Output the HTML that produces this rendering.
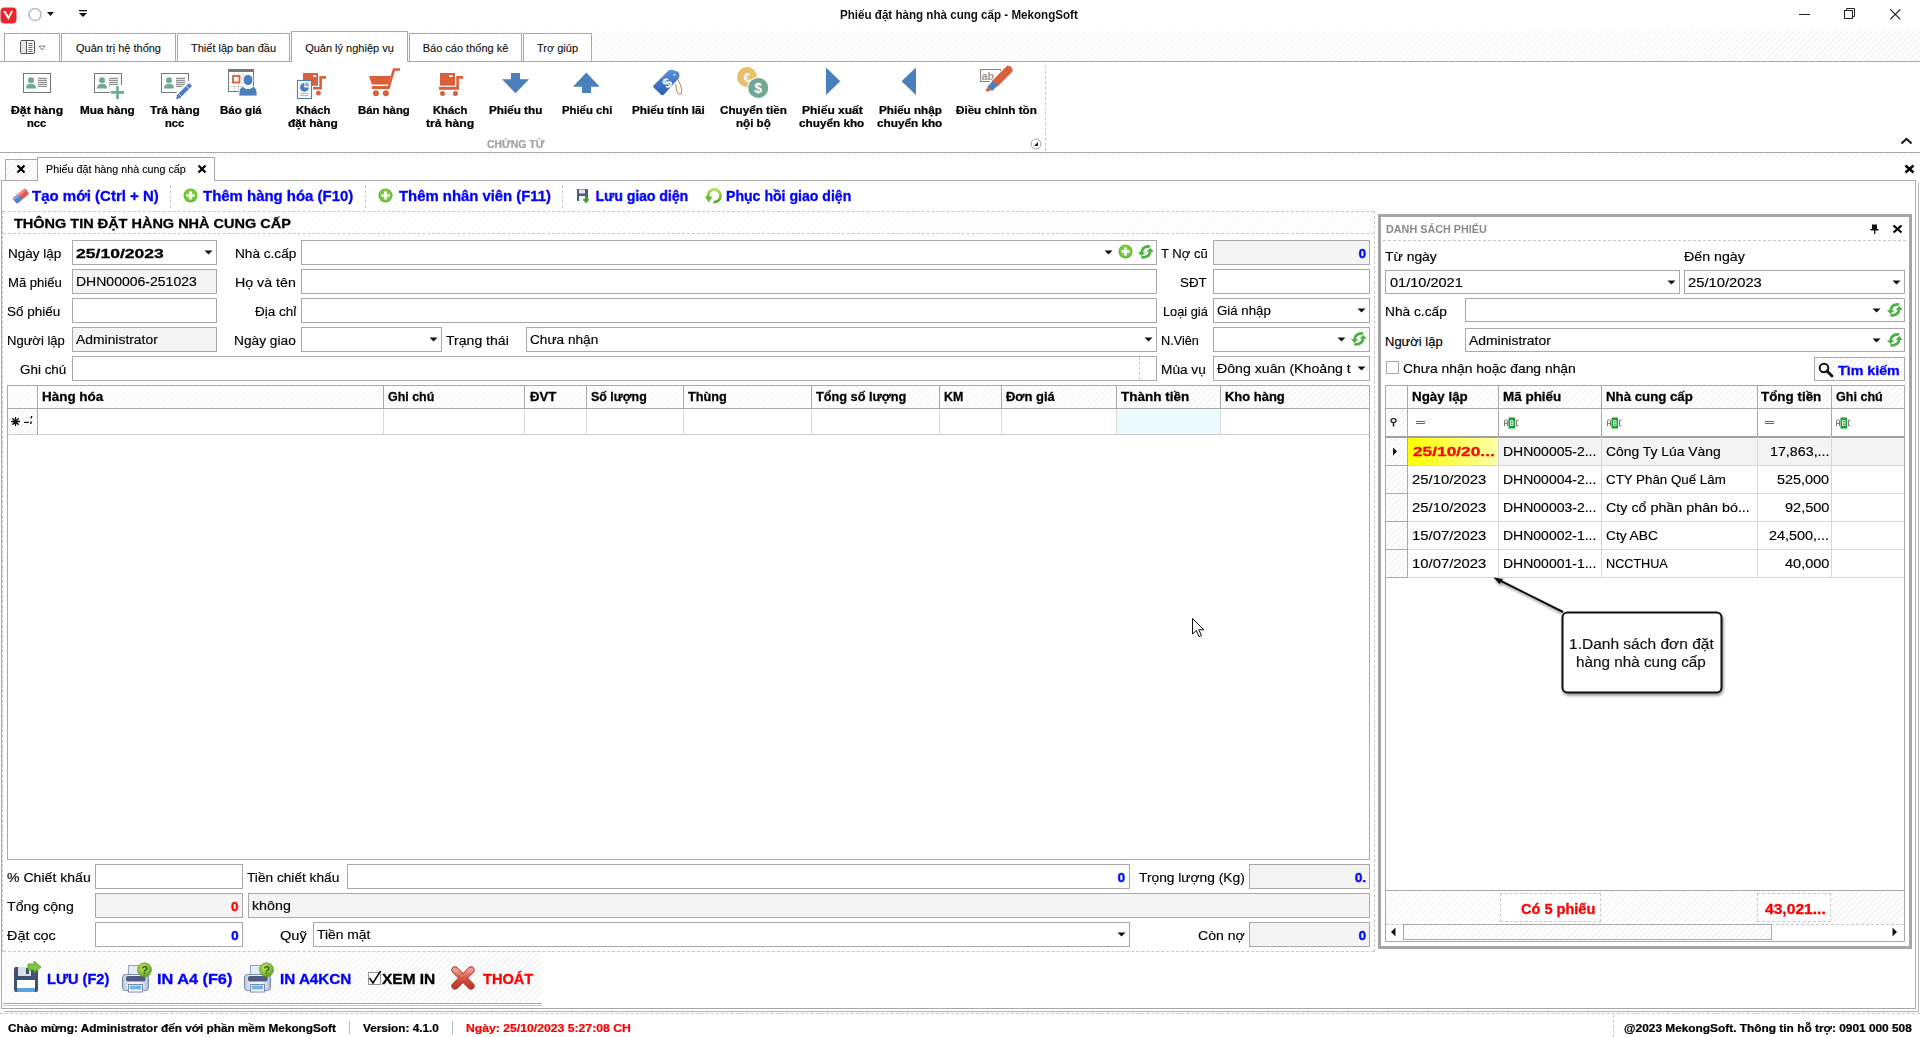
<!DOCTYPE html><html><head><meta charset="utf-8"><title>Phiếu đặt hàng nhà cung cấp - MekongSoft</title><style>*{margin:0;padding:0;box-sizing:border-box}
html,body{width:1920px;height:1037px;overflow:hidden;background:#fff;position:relative}
.a{position:absolute}
.t{position:absolute;white-space:pre;line-height:1;font-family:'Liberation Sans', sans-serif;transform-origin:0 0}
svg.a{overflow:visible}</style></head><body>
<svg class="a" style="left:0px;top:7px;" width="18" height="18" viewBox="0 0 18 18"><rect x="0.5" y="0.5" width="16" height="16" rx="4" fill="#e8262e"/><path d="M3 4 L8.5 13 L13 4 L11 4 L8.5 9 L5.5 4 Z" fill="#fff"/></svg>
<svg class="a" style="left:26px;top:6px;" width="20" height="18" viewBox="0 0 20 18"><circle cx="9" cy="8.5" r="6" fill="none" stroke="#bdbdbd" stroke-width="1.6"/></svg>
<svg class="a" style="left:46px;top:11px;" width="10" height="6" viewBox="0 0 10 6"><path d="M1 1 L8 1 L4.5 5 Z" fill="#111"/></svg>
<svg class="a" style="left:78px;top:9px;" width="12" height="10" viewBox="0 0 12 10"><rect x="1" y="1" width="8" height="1.3" fill="#111"/><path d="M1 4 L9 4 L5 8 Z" fill="#111"/></svg>
<div class="t" style="left:839.85px;top:9.42px;font-size:12.5px;font-weight:700;-webkit-text-stroke:0.27px #111;color:#111;transform:scaleX(0.9279);-webkit-text-stroke:0;">Phiếu đặt hàng nhà cung cấp - MekongSoft</div>
<div class="a" style="left:1799px;top:14px;width:11px;height:1px;background:#222;"></div>
<svg class="a" style="left:1843px;top:7px;" width="14" height="14" viewBox="0 0 14 14"><rect x="1.5" y="3.5" width="8" height="8" fill="none" stroke="#222" stroke-width="1"/><path d="M3.5 3.5 V1.5 H11.5 V9.5 H9.5" fill="none" stroke="#222" stroke-width="1"/></svg>
<svg class="a" style="left:1888px;top:7px;" width="15" height="15" viewBox="0 0 15 15"><path d="M2.3 2.3 L12.3 12.3 M12.3 2.3 L2.3 12.3" stroke="#111" stroke-width="1.1"/></svg>
<div class="a" style="left:0px;top:31px;width:1920px;height:30px;background:repeating-linear-gradient(-45deg,#fff 0px,#fff 3.5px,#f0f0f0 3.55px,#f0f0f0 4.243px);"></div>
<div class="a" style="left:0px;top:61px;width:1920px;height:1px;background:#a9a9a9;"></div>
<div class="a" style="left:4px;top:33px;width:56px;height:29px;border:1px solid #a9a9a9;background:#fff;"></div>
<div class="a" style="left:61px;top:33px;width:115px;height:29px;border:1px solid #a9a9a9;background:#fff;"></div>
<div class="t" style="left:75.99px;top:42.69px;font-size:11px;-webkit-text-stroke:0.13px #111;color:#111;">Quản trị hệ thống</div>
<div class="a" style="left:177px;top:33px;width:113px;height:29px;border:1px solid #a9a9a9;background:#fff;"></div>
<div class="t" style="left:190.99px;top:42.69px;font-size:11px;-webkit-text-stroke:0.13px #111;color:#111;">Thiết lập ban đầu</div>
<div class="a" style="left:291px;top:31px;width:117px;height:31px;border:1px solid #a9a9a9;border-bottom:none;background:#fff"></div>
<div class="t" style="left:305.16px;top:42.69px;font-size:11px;-webkit-text-stroke:0.13px #111;color:#111;">Quản lý nghiệp vụ</div>
<div class="a" style="left:409px;top:33px;width:113px;height:29px;border:1px solid #a9a9a9;background:#fff;"></div>
<div class="t" style="left:422.69px;top:42.69px;font-size:11px;-webkit-text-stroke:0.13px #111;color:#111;">Báo cáo thống kê</div>
<div class="a" style="left:523px;top:33px;width:69px;height:29px;border:1px solid #a9a9a9;background:#fff;"></div>
<div class="t" style="left:536.98px;top:42.69px;font-size:11px;-webkit-text-stroke:0.13px #111;color:#111;">Trợ giúp</div>
<svg class="a" style="left:18px;top:38px;" width="30" height="18" viewBox="0 0 30 18"><rect x="2.5" y="2.5" width="14" height="13" rx="1.5" fill="#fff" stroke="#555" stroke-width="1"/><rect x="3" y="3" width="5" height="12" fill="#e6e6e6"/><line x1="8.5" y1="3" x2="8.5" y2="15" stroke="#555"/><path d="M10.5 5.5h4M10.5 7.5h4M10.5 9.5h4M10.5 11.5h4M10.5 13.5h4" stroke="#555" stroke-width="0.9"/><path d="M21 8 L27 8 L24 12 Z" fill="none" stroke="#777" stroke-width="0.9"/></svg>
<div class="t" style="left:10.85px;top:104.69px;font-size:11px;font-weight:700;-webkit-text-stroke:0.24px #000;color:#000;transform:scaleX(1.1113);">Đặt hàng</div>
<div class="t" style="left:27.35px;top:117.69px;font-size:11px;font-weight:700;-webkit-text-stroke:0.24px #000;color:#000;transform:scaleX(1.0175);">ncc</div>
<div class="t" style="left:80.10px;top:104.69px;font-size:11px;font-weight:700;-webkit-text-stroke:0.24px #000;color:#000;transform:scaleX(1.0673);">Mua hàng</div>
<div class="t" style="left:150.10px;top:104.69px;font-size:11px;font-weight:700;-webkit-text-stroke:0.24px #000;color:#000;transform:scaleX(1.0863);">Trả hàng</div>
<div class="t" style="left:165.35px;top:117.69px;font-size:11px;font-weight:700;-webkit-text-stroke:0.24px #000;color:#000;transform:scaleX(1.0175);">ncc</div>
<div class="t" style="left:220.10px;top:104.69px;font-size:11px;font-weight:700;-webkit-text-stroke:0.24px #000;color:#000;transform:scaleX(1.0520);">Báo giá</div>
<div class="t" style="left:295.85px;top:104.69px;font-size:11px;font-weight:700;-webkit-text-stroke:0.24px #000;color:#000;transform:scaleX(1.0201);">Khách</div>
<div class="t" style="left:288.10px;top:117.69px;font-size:11px;font-weight:700;-webkit-text-stroke:0.24px #000;color:#000;transform:scaleX(1.0863);">đặt hàng</div>
<div class="t" style="left:358.10px;top:104.69px;font-size:11px;font-weight:700;-webkit-text-stroke:0.24px #000;color:#000;transform:scaleX(1.0334);">Bán hàng</div>
<div class="t" style="left:432.85px;top:104.69px;font-size:11px;font-weight:700;-webkit-text-stroke:0.24px #000;color:#000;transform:scaleX(1.0201);">Khách</div>
<div class="t" style="left:425.85px;top:117.69px;font-size:11px;font-weight:700;-webkit-text-stroke:0.24px #000;color:#000;transform:scaleX(1.1127);">trả hàng</div>
<div class="t" style="left:488.85px;top:104.69px;font-size:11px;font-weight:700;-webkit-text-stroke:0.24px #000;color:#000;transform:scaleX(1.0637);">Phiếu thu</div>
<div class="t" style="left:561.85px;top:104.69px;font-size:11px;font-weight:700;-webkit-text-stroke:0.24px #000;color:#000;transform:scaleX(1.0285);">Phiếu chi</div>
<div class="t" style="left:631.60px;top:104.69px;font-size:11px;font-weight:700;-webkit-text-stroke:0.24px #000;color:#000;transform:scaleX(1.0635);">Phiếu tính lãi</div>
<div class="t" style="left:719.60px;top:104.69px;font-size:11px;font-weight:700;-webkit-text-stroke:0.24px #000;color:#000;transform:scaleX(1.0611);">Chuyển tiền</div>
<div class="t" style="left:735.60px;top:117.69px;font-size:11px;font-weight:700;-webkit-text-stroke:0.24px #000;color:#000;transform:scaleX(1.0545);">nội bộ</div>
<div class="t" style="left:801.60px;top:104.69px;font-size:11px;font-weight:700;-webkit-text-stroke:0.24px #000;color:#000;transform:scaleX(1.0930);">Phiếu xuất</div>
<div class="t" style="left:799.35px;top:117.69px;font-size:11px;font-weight:700;-webkit-text-stroke:0.24px #000;color:#000;transform:scaleX(1.0683);">chuyển kho</div>
<div class="t" style="left:878.60px;top:104.69px;font-size:11px;font-weight:700;-webkit-text-stroke:0.24px #000;color:#000;transform:scaleX(1.0594);">Phiếu nhập</div>
<div class="t" style="left:877.35px;top:117.69px;font-size:11px;font-weight:700;-webkit-text-stroke:0.24px #000;color:#000;transform:scaleX(1.0683);">chuyển kho</div>
<div class="t" style="left:955.60px;top:104.69px;font-size:11px;font-weight:700;-webkit-text-stroke:0.24px #000;color:#000;transform:scaleX(1.0577);">Điều chỉnh tồn</div>
<svg class="a" style="left:0;top:0" width="1100" height="152" viewBox="0 0 1100 152"><rect x="23.5" y="73.5" width="27" height="19" fill="#fff" stroke="#777" stroke-width="1"/><circle fill="#6fa893" cx="31" cy="80.3" r="3"/><path d="M26 88.5 Q26 84 30 84 L32 84 Q36 84 36 88.5 Z" fill="#6fa893"/><rect x="38" y="77.8" width="9" height="1" fill="#777"/><rect x="38" y="79.8" width="9" height="1" fill="#777"/><rect x="38" y="81.8" width="9" height="1" fill="#777"/><rect x="38" y="83.8" width="9" height="1" fill="#777"/><rect x="38" y="85.8" width="9" height="1" fill="#777"/><rect x="94.5" y="73.5" width="27" height="19" fill="#fff" stroke="#777" stroke-width="1"/><circle fill="#6fa893" cx="102" cy="80.3" r="3"/><path d="M97 88.5 Q97 84 101 84 L103 84 Q107 84 107 88.5 Z" fill="#6fa893"/><rect x="109" y="77.8" width="9" height="1" fill="#777"/><rect x="109" y="79.8" width="9" height="1" fill="#777"/><rect x="109" y="81.8" width="9" height="1" fill="#777"/><rect x="109" y="83.8" width="9" height="1" fill="#777"/><rect x="109" y="85.8" width="9" height="1" fill="#777"/><rect x="110" y="85" width="15" height="15" fill="#fff"/><rect x="116.2" y="86" width="2.6" height="13" fill="#6fa893"/><rect x="111" y="91" width="13" height="2.8" fill="#6fa893"/><rect x="161.5" y="73.5" width="27" height="19" fill="#fff" stroke="#777" stroke-width="1"/><circle fill="#6fa893" cx="169" cy="80.3" r="3"/><path d="M164 88.5 Q164 84 168 84 L170 84 Q174 84 174 88.5 Z" fill="#6fa893"/><rect x="176" y="77.8" width="9" height="1" fill="#777"/><rect x="176" y="79.8" width="9" height="1" fill="#777"/><rect x="176" y="81.8" width="9" height="1" fill="#777"/><rect x="176" y="83.8" width="9" height="1" fill="#777"/><rect x="176" y="85.8" width="9" height="1" fill="#777"/><rect x="185" y="88" width="5" height="6" fill="#fff"/><path d="M175 100 L193 82" stroke="#fff" stroke-width="8"/><path d="M178 97 L190.5 84.5" stroke="#4a7fbd" stroke-width="4.2"/><path d="M176 99.2 L177.2 95 L180.3 98 Z" fill="#4a7fbd"/><path d="M178.6 93.6 L181.5 96.5 M186.3 85.9 L189.2 88.8" stroke="#fff" stroke-width="0.8"/><rect x="228.5" y="70.5" width="25" height="21" fill="#fff" stroke="#777" stroke-width="1"/><rect x="228" y="69" width="26" height="3" fill="#777"/><path d="M228.5 86.5 H244 M234 73 V91 M238.5 73 V91 M243 73 V86" stroke="#ccc" stroke-width="0.8"/><rect x="233" y="76" width="6.5" height="6.5" fill="#fff" stroke="#d9603b" stroke-width="1.8"/><ellipse cx="248" cy="80" rx="5" ry="5.6" fill="#4a7fbd" stroke="#fff" stroke-width="1"/><path d="M239 96 Q238.5 88 242.5 86.5 L246 88.5 L250 88.5 L253.5 86.5 Q257.5 88 257 96 Z" fill="#4a7fbd" stroke="#fff" stroke-width="0.8"/><rect x="303" y="73" width="15" height="12.8" fill="#d9603b"/><rect x="313" y="75" width="3.2" height="2" fill="#fff"/><path d="M313 88.2 H320.6 V77.4 H326" fill="none" stroke="#d9603b" stroke-width="2.6"/><circle cx="318.4" cy="93.2" r="2.4" fill="#d9603b"/><rect x="297.5" y="80.5" width="14" height="18" fill="#fff" stroke="#4a7fbd" stroke-width="1.1"/><path d="M304.4 83 A4.4 4.4 0 1 0 308.8 87.4 L304.4 87.4 Z" fill="#4a7fbd"/><path d="M305.3 82.3 A4 4 0 0 1 309.3 86.3 L305.3 86.3 Z" fill="#8fb0d8"/><rect x="300" y="93" width="9" height="0.8" fill="#aaa"/><rect x="300" y="95.2" width="9" height="0.8" fill="#aaa"/><path d="M369 76 L391 76 L388.5 84.6 L371.8 84.6 Z" fill="#d9603b"/><path d="M388.2 89 L394 69.5 H400" fill="none" stroke="#d9603b" stroke-width="2.6"/><rect x="372" y="86" width="17" height="3" fill="#d9603b"/><circle cx="375.9" cy="93.2" r="3" fill="#d9603b"/><circle cx="385.9" cy="93.2" r="3" fill="#d9603b"/><rect x="440" y="73" width="15" height="12.6" fill="#d9603b"/><rect x="449" y="75" width="3.6" height="2" fill="#fff"/><rect x="439" y="86.8" width="20" height="3" fill="#d9603b"/><path d="M457.6 87 V77.4 H463" fill="none" stroke="#d9603b" stroke-width="2.6"/><circle cx="442.5" cy="93.5" r="2.5" fill="#d9603b"/><circle cx="455.4" cy="93.5" r="2.5" fill="#d9603b"/><path d="M511 73 H520 V79.2 H529 L515.5 93.2 L502 79.2 H511 Z" fill="#4a7fbd"/><path d="M586.3 72.6 L599.8 86.8 H591 V92.9 H582 V86.8 H573 Z" fill="#4a7fbd"/><defs><linearGradient id="tg" x1="0" y1="0" x2="0" y2="1"><stop offset="0" stop-color="#5a8fe0"/><stop offset="1" stop-color="#2b5fb0"/></linearGradient></defs><path d="M653.5 85.5 L668.5 70.5 Q670 69.5 672 69.8 L677.5 71.5 Q679.5 72.8 679.5 75 L679 78 L664 94.5 Q663 95.8 661.5 95 L654 88 Q652.5 86.5 653.5 85.5 Z" fill="url(#tg)"/><circle cx="674.5" cy="75" r="1" fill="#fff"/><path d="M674.5 75.3 Q683 85 681.5 94 Q679 96 677 92 L675.5 84" fill="none" stroke="#9a6a3e" stroke-width="0.8"/><text x="667" y="88" font-family="Liberation Sans" font-size="14" font-weight="bold" fill="#fff" text-anchor="middle" transform="rotate(-40 667 83)">$</text><circle cx="747" cy="77" r="10" fill="#e8c06a"/><text x="747" y="81.5" font-family="Liberation Sans" font-size="12" font-weight="bold" fill="#fff" text-anchor="middle">€</text><circle cx="758.2" cy="87.9" r="11" fill="#fff"/><circle cx="758.2" cy="87.9" r="10" fill="#6fa893"/><text x="758.2" y="93" font-family="Liberation Sans" font-size="14" font-weight="bold" fill="#fff" text-anchor="middle">$</text><path d="M826 67.6 L840.3 81.3 L826 95.1 Z" fill="#4a7fbd"/><path d="M916 67.6 L901.5 81.3 L916 95.1 Z" fill="#4a7fbd"/><rect x="980.5" y="69.5" width="20" height="12" fill="#fff" stroke="#888" stroke-width="1"/><text x="981.5" y="79.5" font-family="Liberation Sans" font-size="11" font-weight="bold" fill="#999">ab</text><path d="M992.5 86 L1009 69.5" stroke="#fff" stroke-width="10"/><path d="M995.5 83 L1008.5 70" stroke="#d9603b" stroke-width="8" stroke-linecap="round"/><path d="M989.8 88.7 L995.5 83" stroke="#4a7fbd" stroke-width="6.5"/><path d="M985.5 90.5 L988 86.5 L991.5 90 L987.5 91.8 Z" fill="#d9603b"/></svg>
<div class="t" style="left:487.35px;top:139.19px;font-size:11px;font-weight:700;-webkit-text-stroke:0.24px #a3a3a3;color:#a3a3a3;transform:scaleX(0.9483);">CHỨNG TỪ</div>
<div class="a" style="left:1045px;top:66px;width:0;height:85px;border-left:1px dashed #c8c8c8"></div>
<svg class="a" style="left:1030px;top:138px;" width="12" height="12" viewBox="0 0 12 12"><circle cx="6" cy="6" r="5" fill="#fff" stroke="#999" stroke-width="0.9"/><path d="M4 8 L8 8 L8 4 Z" fill="#222"/></svg>
<svg class="a" style="left:1900px;top:137px;" width="13" height="8" viewBox="0 0 13 8"><path d="M1.5 6.5 L6.5 1.8 L11.5 6.5" fill="none" stroke="#111" stroke-width="2"/></svg>
<div class="a" style="left:0px;top:152px;width:1920px;height:1px;background:#a9a9a9;"></div>
<div class="a" style="left:0px;top:153px;width:1920px;height:4px;background:repeating-linear-gradient(-45deg,#fff 0px,#fff 3.5px,#f0f0f0 3.55px,#f0f0f0 4.243px);"></div>
<div class="a" style="left:5px;top:159px;width:33px;height:22px;border:1px solid #a9a9a9;border-bottom:none;background:repeating-linear-gradient(-45deg,#fff 0px,#fff 3.5px,#f0f0f0 3.55px,#f0f0f0 4.243px)"></div>
<div class="a" style="left:37px;top:157px;width:178px;height:24px;border:1px solid #a9a9a9;border-bottom:none;background:#fff"></div>
<svg class="a" style="left:16px;top:164px;" width="10" height="10" viewBox="0 0 10 10"><path d="M1.5 1.5 L8.5 8.5 M8.5 1.5 L1.5 8.5" stroke="#000" stroke-width="2.2"/></svg>
<svg class="a" style="left:197px;top:164px;" width="10" height="10" viewBox="0 0 10 10"><path d="M1.5 1.5 L8.5 8.5 M8.5 1.5 L1.5 8.5" stroke="#000" stroke-width="2.2"/></svg>
<div class="t" style="left:46.00px;top:163.69px;font-size:11px;-webkit-text-stroke:0.13px #000;color:#000;transform:scaleX(0.9768);">Phiếu đặt hàng nhà cung cấp</div>
<svg class="a" style="left:1904px;top:164px;" width="11" height="10" viewBox="0 0 11 10"><path d="M1.5 1.5 L9.5 8.5 M9.5 1.5 L1.5 8.5" stroke="#000" stroke-width="2.4"/></svg>
<div class="a" style="left:1px;top:180px;width:36px;height:1px;background:#a9a9a9;"></div>
<div class="a" style="left:214px;top:180px;width:1702px;height:1px;background:#a9a9a9;"></div>
<div class="a" style="left:1px;top:180px;width:1px;height:828px;background:#a9a9a9;"></div>
<div class="a" style="left:1915px;top:180px;width:1px;height:828px;background:#a9a9a9;"></div>
<div class="a" style="left:1918px;top:183px;width:1px;height:828px;background:#b5b5b5;"></div>
<div class="a" style="left:1px;top:1008px;width:1915px;height:1px;background:#a9a9a9;"></div>
<div class="a" style="left:4px;top:1011px;width:1915px;height:1px;background:#b5b5b5;"></div>
<svg class="a" style="left:12px;top:188px;" width="18" height="16" viewBox="0 0 18 16"><g transform="rotate(-40 9 8)"><rect x="1" y="4.5" width="16" height="7" rx="1.5" fill="#e8534a"/><rect x="1" y="4.5" width="7" height="7" rx="1.5" fill="#4a86d6"/><rect x="2" y="5" width="14" height="2" fill="#fff" opacity="0.35"/></g></svg>
<div class="t" style="left:32.00px;top:189.15px;font-size:14px;font-weight:700;-webkit-text-stroke:0.31px #0000ff;color:#0000ff;transform:scaleX(1.0703);">Tạo mới (Ctrl + N)</div>
<div class="a" style="left:170px;top:185px;width:0;height:23px;border-left:1px dashed #c8c8c8"></div>
<svg class="a" style="left:183px;top:188px;" width="16" height="16" viewBox="0 0 16 16"><circle cx="7.5" cy="7.5" r="7" fill="#5fb82e"/><circle cx="7.5" cy="7" r="6" fill="#78cc3c"/><path d="M7.5 3.5 V11.5 M3.5 7.5 H11.5" stroke="#fff" stroke-width="2.6"/></svg>
<div class="t" style="left:203.00px;top:189.15px;font-size:14px;font-weight:700;-webkit-text-stroke:0.31px #0000ff;color:#0000ff;transform:scaleX(1.0675);">Thêm hàng hóa (F10)</div>
<div class="a" style="left:365px;top:185px;width:0;height:23px;border-left:1px dashed #c8c8c8"></div>
<svg class="a" style="left:378px;top:188px;" width="16" height="16" viewBox="0 0 16 16"><circle cx="7.5" cy="7.5" r="7" fill="#5fb82e"/><circle cx="7.5" cy="7" r="6" fill="#78cc3c"/><path d="M7.5 3.5 V11.5 M3.5 7.5 H11.5" stroke="#fff" stroke-width="2.6"/></svg>
<div class="t" style="left:398.75px;top:189.15px;font-size:14px;font-weight:700;-webkit-text-stroke:0.31px #0000ff;color:#0000ff;transform:scaleX(1.0622);">Thêm nhân viên (F11)</div>
<div class="a" style="left:562px;top:185px;width:0;height:23px;border-left:1px dashed #c8c8c8"></div>
<svg class="a" style="left:576px;top:188px;" width="16" height="16" viewBox="0 0 16 16"><rect x="1" y="1" width="11" height="12" fill="#4b5d78"/><rect x="3" y="1.5" width="6" height="4" fill="#dfe6ee"/><rect x="3" y="8" width="7" height="5" fill="#eef2f6"/><path d="M10 8 V13 M7.5 11 L10 14 L12.5 11" stroke="#3aa33a" stroke-width="2" fill="none"/></svg>
<div class="t" style="left:595.50px;top:189.15px;font-size:14px;font-weight:700;-webkit-text-stroke:0.31px #0000ff;color:#0000ff;">Lưu giao diện</div>
<svg class="a" style="left:704px;top:187px;" width="19" height="18" viewBox="0 0 19 18"><defs><linearGradient id="rg" x1="0" y1="0" x2="0" y2="1"><stop offset="0" stop-color="#b5e05a"/><stop offset="1" stop-color="#5aa82a"/></linearGradient></defs><path d="M4.6 11.5 A6.3 6.3 0 1 1 9.5 15" fill="none" stroke="url(#rg)" stroke-width="2.8"/><path d="M1 9.5 L8.5 9.5 L4.7 15.5 Z" fill="#6ab530"/></svg>
<div class="t" style="left:726.00px;top:189.15px;font-size:14px;font-weight:700;-webkit-text-stroke:0.31px #0000ff;color:#0000ff;transform:scaleX(1.0068);">Phục hồi giao diện</div>
<div class="a" style="left:3px;top:212px;width:1371px;height:21px;background:repeating-linear-gradient(-45deg,#fff 0px,#fff 3.5px,#f0f0f0 3.55px,#f0f0f0 4.243px);opacity:0.4"></div>
<div class="a" style="left:3px;top:211px;width:1371px;height:0;border-top:1px dashed #c8c8c8"></div>
<div class="a" style="left:3px;top:233px;width:1371px;height:0;border-top:1px dashed #c8c8c8"></div>
<div class="a" style="left:1374px;top:211px;width:0;height:741px;border-left:1px dashed #c8c8c8"></div>
<div class="a" style="left:2px;top:211px;width:0;height:741px;border-left:1px dashed #c8c8c8"></div>
<div class="t" style="left:14.00px;top:217.07px;font-size:13.5px;font-weight:700;-webkit-text-stroke:0.30px #000;color:#000;transform:scaleX(1.0729);">THÔNG TIN ĐẶT HÀNG NHÀ CUNG CẤP</div>
<div class="t" style="left:7.50px;top:247.62px;font-size:12.5px;-webkit-text-stroke:0.15px #000;color:#000;transform:scaleX(1.0802);">Ngày lập</div>
<div class="a" style="left:72px;top:240px;width:145px;height:25px;border:1px solid #a9a9a9;background:#fff;"></div>
<div class="t" style="left:76.00px;top:246.57px;font-size:13.5px;font-weight:700;-webkit-text-stroke:0.30px #000;color:#000;transform:scaleX(1.2992);">25/10/2023</div>
<svg class="a" style="left:204px;top:250px;" width="9" height="5" viewBox="0 0 9 5"><path d="M0.5 0.5 L8.5 0.5 L4.5 4.5 Z" fill="#111"/></svg>
<div class="t" style="left:234.70px;top:247.62px;font-size:12.5px;-webkit-text-stroke:0.15px #000;color:#000;transform:scaleX(1.0892);">Nhà c.cấp</div>
<div class="a" style="left:301px;top:240px;width:856px;height:25px;border:1px solid #a9a9a9;background:#fff;"></div>
<svg class="a" style="left:1104px;top:250px;" width="9" height="5" viewBox="0 0 9 5"><path d="M0.5 0.5 L8.5 0.5 L4.5 4.5 Z" fill="#111"/></svg>
<svg class="a" style="left:1118px;top:244px;" width="16" height="16" viewBox="0 0 16 16"><circle cx="7.5" cy="7.5" r="7" fill="#5fb82e"/><circle cx="7.5" cy="7" r="6" fill="#78cc3c"/><path d="M7.5 3.5 V11.5 M3.5 7.5 H11.5" stroke="#fff" stroke-width="2.6"/></svg>
<svg class="a" style="left:1137px;top:244px;" width="16" height="15" viewBox="0 0 16 15"><path d="M12 2.3 Q5 2.5 4.6 8.6" stroke="#4cb043" stroke-width="2.7" fill="none" stroke-linecap="round"/><path d="M0.8 8.2 L8.4 8.2 L4.6 12 Z" fill="#4cb043"/><path d="M5.5 13.4 Q12.6 13.1 13.2 7.4" stroke="#4cb043" stroke-width="2.7" fill="none" stroke-linecap="round"/><path d="M9.5 7.7 L16.9 7.7 L13.2 4 Z" fill="#4cb043"/></svg>
<div class="t" style="left:1161.00px;top:247.62px;font-size:12.5px;-webkit-text-stroke:0.15px #000;color:#000;transform:scaleX(1.0447);">T Nợ cũ</div>
<div class="a" style="left:1213px;top:240px;width:157px;height:25px;border:1px solid #a9a9a9;background:#f4f4f4;"></div>
<div class="t" style="left:1358.48px;top:246.57px;font-size:13.5px;font-weight:700;-webkit-text-stroke:0.30px #0000ff;color:#0000ff;">0</div>
<div class="t" style="left:7.50px;top:276.62px;font-size:12.5px;-webkit-text-stroke:0.15px #000;color:#000;transform:scaleX(1.0459);">Mã phiếu</div>
<div class="a" style="left:72px;top:269px;width:145px;height:25px;border:1px solid #a9a9a9;background:#f4f4f4;"></div>
<div class="t" style="left:76.00px;top:276.42px;font-size:12.5px;-webkit-text-stroke:0.15px #000;color:#000;transform:scaleX(1.1214);">DHN00006-251023</div>
<div class="t" style="left:235.20px;top:276.62px;font-size:12.5px;-webkit-text-stroke:0.15px #000;color:#000;transform:scaleX(1.1361);">Họ và tên</div>
<div class="a" style="left:301px;top:269px;width:856px;height:25px;border:1px solid #a9a9a9;background:#fff;"></div>
<div class="t" style="left:1180.20px;top:276.62px;font-size:12.5px;-webkit-text-stroke:0.15px #000;color:#000;transform:scaleX(1.0720);">SĐT</div>
<div class="a" style="left:1213px;top:269px;width:157px;height:25px;border:1px solid #a9a9a9;background:#fff;"></div>
<div class="t" style="left:7.00px;top:305.62px;font-size:12.5px;-webkit-text-stroke:0.15px #000;color:#000;transform:scaleX(1.0798);">Số phiếu</div>
<div class="a" style="left:72px;top:298px;width:145px;height:25px;border:1px solid #a9a9a9;background:#fff;"></div>
<div class="t" style="left:254.70px;top:305.62px;font-size:12.5px;-webkit-text-stroke:0.15px #000;color:#000;transform:scaleX(1.0806);">Địa chỉ</div>
<div class="a" style="left:301px;top:298px;width:856px;height:25px;border:1px solid #a9a9a9;background:#fff;"></div>
<div class="t" style="left:1162.70px;top:305.62px;font-size:12.5px;-webkit-text-stroke:0.15px #000;color:#000;transform:scaleX(1.0229);">Loại giá</div>
<div class="a" style="left:1213px;top:298px;width:157px;height:25px;border:1px solid #a9a9a9;background:#fff;"></div>
<div class="t" style="left:1217.00px;top:305.42px;font-size:12.5px;-webkit-text-stroke:0.15px #000;color:#000;transform:scaleX(1.0604);">Giá nhập</div>
<svg class="a" style="left:1357px;top:308px;" width="9" height="5" viewBox="0 0 9 5"><path d="M0.5 0.5 L8.5 0.5 L4.5 4.5 Z" fill="#111"/></svg>
<div class="t" style="left:7.00px;top:334.62px;font-size:12.5px;-webkit-text-stroke:0.15px #000;color:#000;transform:scaleX(1.0417);">Người lập</div>
<div class="a" style="left:72px;top:327px;width:145px;height:25px;border:1px solid #a9a9a9;background:#f4f4f4;"></div>
<div class="t" style="left:76.00px;top:334.42px;font-size:12.5px;-webkit-text-stroke:0.15px #000;color:#000;transform:scaleX(1.1108);">Administrator</div>
<div class="t" style="left:234.20px;top:334.62px;font-size:12.5px;-webkit-text-stroke:0.15px #000;color:#000;transform:scaleX(1.0978);">Ngày giao</div>
<div class="a" style="left:301px;top:327px;width:141px;height:25px;border:1px solid #a9a9a9;background:#fff;"></div>
<svg class="a" style="left:429px;top:337px;" width="9" height="5" viewBox="0 0 9 5"><path d="M0.5 0.5 L8.5 0.5 L4.5 4.5 Z" fill="#111"/></svg>
<div class="t" style="left:446.00px;top:334.62px;font-size:12.5px;-webkit-text-stroke:0.15px #000;color:#000;transform:scaleX(1.1249);">Trạng thái</div>
<div class="a" style="left:526px;top:327px;width:631px;height:25px;border:1px solid #a9a9a9;background:#fff;"></div>
<div class="t" style="left:530.00px;top:334.42px;font-size:12.5px;-webkit-text-stroke:0.15px #000;color:#000;transform:scaleX(1.0912);">Chưa nhận</div>
<svg class="a" style="left:1144px;top:337px;" width="9" height="5" viewBox="0 0 9 5"><path d="M0.5 0.5 L8.5 0.5 L4.5 4.5 Z" fill="#111"/></svg>
<div class="t" style="left:1161.00px;top:334.62px;font-size:12.5px;-webkit-text-stroke:0.15px #000;color:#000;transform:scaleX(1.0135);">N.Viên</div>
<div class="a" style="left:1213px;top:327px;width:157px;height:25px;border:1px solid #a9a9a9;background:#fff;"></div>
<svg class="a" style="left:1337px;top:337px;" width="9" height="5" viewBox="0 0 9 5"><path d="M0.5 0.5 L8.5 0.5 L4.5 4.5 Z" fill="#111"/></svg>
<svg class="a" style="left:1350px;top:331px;" width="16" height="15" viewBox="0 0 16 15"><path d="M12 2.3 Q5 2.5 4.6 8.6" stroke="#4cb043" stroke-width="2.7" fill="none" stroke-linecap="round"/><path d="M0.8 8.2 L8.4 8.2 L4.6 12 Z" fill="#4cb043"/><path d="M5.5 13.4 Q12.6 13.1 13.2 7.4" stroke="#4cb043" stroke-width="2.7" fill="none" stroke-linecap="round"/><path d="M9.5 7.7 L16.9 7.7 L13.2 4 Z" fill="#4cb043"/></svg>
<div class="t" style="left:20.20px;top:363.62px;font-size:12.5px;-webkit-text-stroke:0.15px #000;color:#000;transform:scaleX(1.0744);">Ghi chú</div>
<div class="a" style="left:72px;top:356px;width:1085px;height:25px;border:1px solid #a9a9a9;background:#fff;"></div>
<div class="a" style="left:1139px;top:357px;width:0;height:23px;border-left:1px dashed #c8c8c8"></div>
<div class="t" style="left:1161.00px;top:363.62px;font-size:12.5px;-webkit-text-stroke:0.15px #000;color:#000;transform:scaleX(1.0927);">Mùa vụ</div>
<div class="a" style="left:1213px;top:356px;width:157px;height:25px;border:1px solid #a9a9a9;background:#fff;"></div>
<div class="t" style="left:1217.00px;top:363.42px;font-size:12.5px;-webkit-text-stroke:0.15px #000;color:#000;transform:scaleX(1.1325);">Đông xuân (Khoảng t</div>
<svg class="a" style="left:1357px;top:366px;" width="9" height="5" viewBox="0 0 9 5"><path d="M0.5 0.5 L8.5 0.5 L4.5 4.5 Z" fill="#111"/></svg>
<div class="a" style="left:7px;top:385px;width:1363px;height:475px;border:1px solid #a9a9a9;background:#fff;"></div>
<div class="a" style="left:8px;top:386px;width:1361px;height:22px;background:repeating-linear-gradient(-45deg,#fff 0px,#fff 3.5px,#f0f0f0 3.55px,#f0f0f0 4.243px);"></div>
<div class="a" style="left:8px;top:408px;width:1361px;height:1px;background:#a9a9a9;"></div>
<div class="a" style="left:37px;top:386px;width:1px;height:22px;background:#a9a9a9;"></div>
<div class="a" style="left:383px;top:386px;width:1px;height:22px;background:#a9a9a9;"></div>
<div class="a" style="left:524px;top:386px;width:1px;height:22px;background:#a9a9a9;"></div>
<div class="a" style="left:586px;top:386px;width:1px;height:22px;background:#a9a9a9;"></div>
<div class="a" style="left:683px;top:386px;width:1px;height:22px;background:#a9a9a9;"></div>
<div class="a" style="left:811px;top:386px;width:1px;height:22px;background:#a9a9a9;"></div>
<div class="a" style="left:939px;top:386px;width:1px;height:22px;background:#a9a9a9;"></div>
<div class="a" style="left:1001px;top:386px;width:1px;height:22px;background:#a9a9a9;"></div>
<div class="a" style="left:1116px;top:386px;width:1px;height:22px;background:#a9a9a9;"></div>
<div class="a" style="left:1220px;top:386px;width:1px;height:22px;background:#a9a9a9;"></div>
<div class="t" style="left:42.00px;top:390.84px;font-size:12px;font-weight:700;-webkit-text-stroke:0.26px #000;color:#000;transform:scaleX(1.1212);">Hàng hóa</div>
<div class="t" style="left:387.50px;top:390.84px;font-size:12px;font-weight:700;-webkit-text-stroke:0.26px #000;color:#000;transform:scaleX(1.0364);">Ghi chú</div>
<div class="t" style="left:529.50px;top:390.84px;font-size:12px;font-weight:700;-webkit-text-stroke:0.26px #000;color:#000;transform:scaleX(1.0958);">ĐVT</div>
<div class="t" style="left:591.00px;top:390.84px;font-size:12px;font-weight:700;-webkit-text-stroke:0.26px #000;color:#000;transform:scaleX(1.0354);">Số lượng</div>
<div class="t" style="left:688.00px;top:390.84px;font-size:12px;font-weight:700;-webkit-text-stroke:0.26px #000;color:#000;transform:scaleX(1.0585);">Thùng</div>
<div class="t" style="left:816.00px;top:390.84px;font-size:12px;font-weight:700;-webkit-text-stroke:0.26px #000;color:#000;transform:scaleX(1.0596);">Tổng số lượng</div>
<div class="t" style="left:944.00px;top:390.84px;font-size:12px;font-weight:700;-webkit-text-stroke:0.26px #000;color:#000;transform:scaleX(1.0336);">KM</div>
<div class="t" style="left:1006.00px;top:390.84px;font-size:12px;font-weight:700;-webkit-text-stroke:0.26px #000;color:#000;transform:scaleX(1.0796);">Đơn giá</div>
<div class="t" style="left:1121.00px;top:390.84px;font-size:12px;font-weight:700;-webkit-text-stroke:0.26px #000;color:#000;transform:scaleX(1.1257);">Thành tiền</div>
<div class="t" style="left:1225.00px;top:390.84px;font-size:12px;font-weight:700;-webkit-text-stroke:0.26px #000;color:#000;transform:scaleX(1.0808);">Kho hàng</div>
<div class="a" style="left:8px;top:409px;width:29px;height:25px;background:repeating-linear-gradient(-45deg,#fff 0px,#fff 3.5px,#f0f0f0 3.55px,#f0f0f0 4.243px);"></div>
<div class="a" style="left:37px;top:408px;width:1px;height:26px;background:#a9a9a9;"></div>
<div class="a" style="left:1117px;top:409px;width:103px;height:25px;background:#ebfbff;"></div>
<div class="a" style="left:383px;top:409px;width:1px;height:25px;background:#d8d8d8;"></div>
<div class="a" style="left:524px;top:409px;width:1px;height:25px;background:#d8d8d8;"></div>
<div class="a" style="left:586px;top:409px;width:1px;height:25px;background:#d8d8d8;"></div>
<div class="a" style="left:683px;top:409px;width:1px;height:25px;background:#d8d8d8;"></div>
<div class="a" style="left:811px;top:409px;width:1px;height:25px;background:#d8d8d8;"></div>
<div class="a" style="left:939px;top:409px;width:1px;height:25px;background:#d8d8d8;"></div>
<div class="a" style="left:1001px;top:409px;width:1px;height:25px;background:#d8d8d8;"></div>
<div class="a" style="left:1116px;top:409px;width:1px;height:25px;background:#d8d8d8;"></div>
<div class="a" style="left:1220px;top:409px;width:1px;height:25px;background:#d8d8d8;"></div>
<div class="a" style="left:8px;top:434px;width:1361px;height:1px;background:#d0d0d0;"></div>
<svg class="a" style="left:10px;top:416px;" width="24" height="12" viewBox="0 0 24 12"><path d="M5.5 1 V10 M1 5.5 H10 M2.3 2.3 L8.7 8.7 M8.7 2.3 L2.3 8.7" stroke="#111" stroke-width="1.3"/><rect x="14" y="5.8" width="5" height="1.2" fill="#111"/><path d="M21 0 L22.5 0 L21.8 2.5 L20.6 2.5 Z M20.5 5.5 L22 5.5 L21.4 8 L20 8 Z" fill="#111"/></svg>
<div class="t" style="left:7.00px;top:871.62px;font-size:12.5px;-webkit-text-stroke:0.15px #000;color:#000;transform:scaleX(1.1270);">% Chiết khấu</div>
<div class="a" style="left:95px;top:864px;width:148px;height:25px;border:1px solid #a9a9a9;background:#fff;"></div>
<div class="t" style="left:247.00px;top:871.62px;font-size:12.5px;-webkit-text-stroke:0.15px #000;color:#000;transform:scaleX(1.0947);">Tiền chiết khấu</div>
<div class="a" style="left:347px;top:864px;width:783px;height:25px;border:1px solid #a9a9a9;background:#fff;"></div>
<div class="t" style="left:1117.48px;top:870.57px;font-size:13.5px;font-weight:700;-webkit-text-stroke:0.30px #0000ff;color:#0000ff;">0</div>
<div class="t" style="left:1138.50px;top:871.62px;font-size:12.5px;-webkit-text-stroke:0.15px #000;color:#000;transform:scaleX(1.1021);">Trọng lượng (Kg)</div>
<div class="a" style="left:1249px;top:864px;width:121px;height:25px;border:1px solid #a9a9a9;background:#f4f4f4;"></div>
<div class="t" style="left:1354.73px;top:870.57px;font-size:13.5px;font-weight:700;-webkit-text-stroke:0.30px #0000ff;color:#0000ff;">0.</div>
<div class="t" style="left:7.00px;top:900.62px;font-size:12.5px;-webkit-text-stroke:0.15px #000;color:#000;transform:scaleX(1.1307);">Tổng cộng</div>
<div class="a" style="left:95px;top:893px;width:148px;height:25px;border:1px solid #a9a9a9;background:#f4f4f4;"></div>
<div class="t" style="left:230.98px;top:899.57px;font-size:13.5px;font-weight:700;-webkit-text-stroke:0.30px #ff0000;color:#ff0000;">0</div>
<div class="a" style="left:248px;top:893px;width:1122px;height:25px;border:1px solid #a9a9a9;background:#f4f4f4;"></div>
<div class="t" style="left:251.50px;top:900.42px;font-size:12.5px;-webkit-text-stroke:0.15px #000;color:#000;transform:scaleX(1.1391);">không</div>
<div class="t" style="left:7.00px;top:929.62px;font-size:12.5px;-webkit-text-stroke:0.15px #000;color:#000;transform:scaleX(1.1512);">Đặt cọc</div>
<div class="a" style="left:95px;top:922px;width:148px;height:25px;border:1px solid #a9a9a9;background:#fff;"></div>
<div class="t" style="left:230.98px;top:928.57px;font-size:13.5px;font-weight:700;-webkit-text-stroke:0.30px #0000ff;color:#0000ff;">0</div>
<div class="t" style="left:279.70px;top:929.62px;font-size:12.5px;-webkit-text-stroke:0.15px #000;color:#000;transform:scaleX(1.1684);">Quỹ</div>
<div class="a" style="left:313px;top:922px;width:817px;height:25px;border:1px solid #a9a9a9;background:#fff;"></div>
<div class="t" style="left:316.50px;top:929.42px;font-size:12.5px;-webkit-text-stroke:0.15px #000;color:#000;transform:scaleX(1.1065);">Tiền mặt</div>
<svg class="a" style="left:1117px;top:932px;" width="9" height="5" viewBox="0 0 9 5"><path d="M0.5 0.5 L8.5 0.5 L4.5 4.5 Z" fill="#111"/></svg>
<div class="t" style="left:1198.20px;top:929.62px;font-size:12.5px;-webkit-text-stroke:0.15px #000;color:#000;transform:scaleX(1.1260);">Còn nợ</div>
<div class="a" style="left:1249px;top:922px;width:121px;height:25px;border:1px solid #a9a9a9;background:#f4f4f4;"></div>
<div class="t" style="left:1358.48px;top:928.57px;font-size:13.5px;font-weight:700;-webkit-text-stroke:0.30px #0000ff;color:#0000ff;">0</div>
<div class="a" style="left:3px;top:951px;width:1371px;height:0;border-top:1px dashed #c8c8c8"></div>
<div class="a" style="left:3px;top:952px;width:539px;height:51px;background:repeating-linear-gradient(-45deg,#fff 0px,#fff 3.5px,#f0f0f0 3.55px,#f0f0f0 4.243px);"></div>
<div class="a" style="left:3px;top:1003px;width:539px;height:1px;background:#a9a9a9;"></div>
<div class="a" style="left:3px;top:1005px;width:539px;height:1px;background:#c8c8c8;"></div>
<div class="a" style="left:0px;top:1013px;width:1920px;height:0;border-top:1px dashed #c8c8c8"></div>
<svg class="a" style="left:13px;top:961px;" width="28" height="32" viewBox="0 0 28 32"><rect x="1" y="6" width="24" height="25" rx="2" fill="#3f516b"/><rect x="5" y="6" width="13" height="9" fill="#d7dee8"/><rect x="13" y="7" width="3" height="6" fill="#3f516b"/><rect x="4" y="19" width="18" height="12" fill="#fff"/><rect x="4" y="27" width="18" height="4" fill="#5ba3de"/><path d="M15 3 H21 V0 L28 6 L21 12 V9 H15 Z" fill="#7cc640" stroke="#4f9a22" stroke-width="0.8"/></svg>
<div class="t" style="left:47.00px;top:970.80px;font-size:15px;font-weight:700;-webkit-text-stroke:0.33px #0000ff;color:#0000ff;transform:scaleX(0.9718);">LƯU (F2)</div>
<svg class="a" style="left:121px;top:961px;" width="30" height="30" viewBox="0 0 30 30"><defs><linearGradient id="pb" x1="0" y1="0" x2="1" y2="0"><stop offset="0" stop-color="#b9c6da"/><stop offset="0.3" stop-color="#f2f5fa"/><stop offset="0.7" stop-color="#f2f5fa"/><stop offset="1" stop-color="#a9b8d0"/></linearGradient><radialGradient id="gq" cx="0.4" cy="0.35" r="0.7"><stop offset="0" stop-color="#c5e86a"/><stop offset="1" stop-color="#5a9e1e"/></radialGradient></defs><rect x="7.5" y="4.5" width="11" height="12" fill="#e6ebf4" stroke="#8a9ac0" stroke-width="0.9"/><rect x="1.5" y="13.5" width="26" height="16" rx="3" fill="url(#pb)" stroke="#6d7fa8" stroke-width="0.9"/><rect x="5" y="15" width="19.5" height="5.5" rx="2" fill="#4e5b80"/><rect x="7.5" y="23.5" width="14" height="7.5" fill="#fff" stroke="#6d7fa8" stroke-width="0.9"/><rect x="9" y="24.5" width="11" height="4" fill="#6fb3e8"/><circle cx="23.5" cy="8.8" r="7" fill="url(#gq)" stroke="#4f8a1a" stroke-width="0.6"/><text x="23.5" y="13" font-size="11" font-weight="bold" text-anchor="middle" fill="#2f5e12" font-family="Liberation Sans">?</text></svg>
<div class="t" style="left:157.00px;top:970.80px;font-size:15px;font-weight:700;-webkit-text-stroke:0.33px #0000ff;color:#0000ff;transform:scaleX(1.0842);">IN A4 (F6)</div>
<svg class="a" style="left:243px;top:961px;" width="30" height="30" viewBox="0 0 30 30"><defs><linearGradient id="pb" x1="0" y1="0" x2="1" y2="0"><stop offset="0" stop-color="#b9c6da"/><stop offset="0.3" stop-color="#f2f5fa"/><stop offset="0.7" stop-color="#f2f5fa"/><stop offset="1" stop-color="#a9b8d0"/></linearGradient><radialGradient id="gq" cx="0.4" cy="0.35" r="0.7"><stop offset="0" stop-color="#c5e86a"/><stop offset="1" stop-color="#5a9e1e"/></radialGradient></defs><rect x="7.5" y="4.5" width="11" height="12" fill="#e6ebf4" stroke="#8a9ac0" stroke-width="0.9"/><rect x="1.5" y="13.5" width="26" height="16" rx="3" fill="url(#pb)" stroke="#6d7fa8" stroke-width="0.9"/><rect x="5" y="15" width="19.5" height="5.5" rx="2" fill="#4e5b80"/><rect x="7.5" y="23.5" width="14" height="7.5" fill="#fff" stroke="#6d7fa8" stroke-width="0.9"/><rect x="9" y="24.5" width="11" height="4" fill="#6fb3e8"/><circle cx="23.5" cy="8.8" r="7" fill="url(#gq)" stroke="#4f8a1a" stroke-width="0.6"/><text x="23.5" y="13" font-size="11" font-weight="bold" text-anchor="middle" fill="#2f5e12" font-family="Liberation Sans">?</text></svg>
<div class="t" style="left:279.50px;top:970.80px;font-size:15px;font-weight:700;-webkit-text-stroke:0.33px #0000ff;color:#0000ff;transform:scaleX(1.0143);">IN A4KCN</div>
<svg class="a" style="left:367px;top:970px;" width="16" height="16" viewBox="0 0 16 16"><rect x="1.5" y="2.5" width="12" height="12" fill="#fff" stroke="#999"/><path d="M2.5 8 L6 13 L13.5 1" fill="none" stroke="#111" stroke-width="1.6"/></svg>
<div class="t" style="left:382.00px;top:970.80px;font-size:15px;font-weight:700;-webkit-text-stroke:0.33px #000;color:#000;transform:scaleX(1.0312);">XEM IN</div>
<svg class="a" style="left:448px;top:963px;" width="30" height="30" viewBox="0 0 30 30"><defs><linearGradient id="xg" x1="0" y1="0" x2="0" y2="1"><stop offset="0" stop-color="#f0a090"/><stop offset="0.45" stop-color="#dc5a4a"/><stop offset="1" stop-color="#c03a2c"/></linearGradient></defs><path d="M7 7 L23 23 M23 7 L7 23" stroke="#a8302a" stroke-width="7.2" stroke-linecap="round"/><path d="M7 7 L23 23 M23 7 L7 23" stroke="url(#xg)" stroke-width="5.4" stroke-linecap="round"/></svg>
<div class="t" style="left:483.00px;top:970.80px;font-size:15px;font-weight:700;-webkit-text-stroke:0.33px #ff0000;color:#ff0000;transform:scaleX(0.9735);">THOÁT</div>
<div class="t" style="left:8.00px;top:1022.69px;font-size:11px;font-weight:700;-webkit-text-stroke:0.24px #000;color:#000;transform:scaleX(1.0681);">Chào mừng: Administrator đến với phần mềm MekongSoft</div>
<div class="a" style="left:349px;top:1021px;width:1px;height:13px;background:#a8bcd6;"></div>
<div class="t" style="left:363.00px;top:1022.69px;font-size:11px;font-weight:700;-webkit-text-stroke:0.24px #000;color:#000;transform:scaleX(1.0685);">Version: 4.1.0</div>
<div class="a" style="left:452px;top:1021px;width:1px;height:13px;background:#a8bcd6;"></div>
<div class="t" style="left:466.00px;top:1022.69px;font-size:11px;font-weight:700;-webkit-text-stroke:0.24px #ff0000;color:#ff0000;transform:scaleX(1.1091);">Ngày: 25/10/2023 5:27:08 CH</div>
<div class="a" style="left:1613px;top:1015px;width:0;height:22px;border-left:1px dashed #c8c8c8"></div>
<div class="t" style="left:1624.00px;top:1022.69px;font-size:11px;font-weight:700;-webkit-text-stroke:0.24px #000;color:#000;transform:scaleX(1.0790);">@2023 MekongSoft. Thông tin hỗ trợ: 0901 000 508</div>
<div class="a" style="left:1378px;top:214px;width:534px;height:735px;border:3px solid #a6a6a6;background:#fff;"></div>
<div class="t" style="left:1386.00px;top:223.69px;font-size:11px;font-weight:700;-webkit-text-stroke:0.24px #8a8a8a;color:#8a8a8a;transform:scaleX(0.9816);-webkit-text-stroke:0;">DANH SÁCH PHIẾU</div>
<svg class="a" style="left:1870px;top:224px;" width="10" height="10" viewBox="0 0 10 10"><rect x="2" y="0.5" width="5" height="5" fill="#111"/><rect x="0.5" y="5" width="8" height="1.5" fill="#111"/><rect x="4" y="6" width="1.3" height="4" fill="#111"/></svg>
<svg class="a" style="left:1892px;top:224px;" width="11" height="10" viewBox="0 0 11 10"><path d="M1.5 1.5 L9.5 8.5 M9.5 1.5 L1.5 8.5" stroke="#000" stroke-width="2.2"/></svg>
<div class="a" style="left:1383px;top:240px;width:523px;height:0;border-top:1px dashed #c8c8c8"></div>
<div class="t" style="left:1385.00px;top:249.50px;font-size:13px;-webkit-text-stroke:0.16px #000;color:#000;transform:scaleX(1.0691);">Từ ngày</div>
<div class="t" style="left:1684.00px;top:249.50px;font-size:13px;-webkit-text-stroke:0.16px #000;color:#000;transform:scaleX(1.0924);">Đến ngày</div>
<div class="a" style="left:1385px;top:270px;width:295px;height:24px;border:1px solid #a9a9a9;background:#fff;"></div>
<div class="t" style="left:1389.50px;top:275.50px;font-size:13px;-webkit-text-stroke:0.16px #000;color:#000;transform:scaleX(1.1187);">01/10/2021</div>
<svg class="a" style="left:1667px;top:280px;" width="9" height="5" viewBox="0 0 9 5"><path d="M0.5 0.5 L8.5 0.5 L4.5 4.5 Z" fill="#111"/></svg>
<div class="a" style="left:1684px;top:270px;width:221px;height:24px;border:1px solid #a9a9a9;background:#fff;"></div>
<div class="t" style="left:1688.00px;top:275.50px;font-size:13px;-webkit-text-stroke:0.16px #000;color:#000;transform:scaleX(1.1340);">25/10/2023</div>
<svg class="a" style="left:1892px;top:280px;" width="9" height="5" viewBox="0 0 9 5"><path d="M0.5 0.5 L8.5 0.5 L4.5 4.5 Z" fill="#111"/></svg>
<div class="t" style="left:1385.00px;top:305.00px;font-size:13px;-webkit-text-stroke:0.16px #000;color:#000;transform:scaleX(1.0556);">Nhà c.cấp</div>
<div class="a" style="left:1465px;top:298px;width:440px;height:24px;border:1px solid #a9a9a9;background:#fff;"></div>
<svg class="a" style="left:1872px;top:308px;" width="9" height="5" viewBox="0 0 9 5"><path d="M0.5 0.5 L8.5 0.5 L4.5 4.5 Z" fill="#111"/></svg>
<svg class="a" style="left:1886px;top:302px;" width="16" height="15" viewBox="0 0 16 15"><path d="M12 2.3 Q5 2.5 4.6 8.6" stroke="#4cb043" stroke-width="2.7" fill="none" stroke-linecap="round"/><path d="M0.8 8.2 L8.4 8.2 L4.6 12 Z" fill="#4cb043"/><path d="M5.5 13.4 Q12.6 13.1 13.2 7.4" stroke="#4cb043" stroke-width="2.7" fill="none" stroke-linecap="round"/><path d="M9.5 7.7 L16.9 7.7 L13.2 4 Z" fill="#4cb043"/></svg>
<div class="t" style="left:1385.00px;top:334.50px;font-size:13px;-webkit-text-stroke:0.16px #000;color:#000;">Người lập</div>
<div class="a" style="left:1465px;top:328px;width:440px;height:24px;border:1px solid #a9a9a9;background:#fff;"></div>
<div class="t" style="left:1469.00px;top:334.00px;font-size:13px;-webkit-text-stroke:0.16px #000;color:#000;transform:scaleX(1.0682);">Administrator</div>
<svg class="a" style="left:1872px;top:338px;" width="9" height="5" viewBox="0 0 9 5"><path d="M0.5 0.5 L8.5 0.5 L4.5 4.5 Z" fill="#111"/></svg>
<svg class="a" style="left:1886px;top:332px;" width="16" height="15" viewBox="0 0 16 15"><path d="M12 2.3 Q5 2.5 4.6 8.6" stroke="#4cb043" stroke-width="2.7" fill="none" stroke-linecap="round"/><path d="M0.8 8.2 L8.4 8.2 L4.6 12 Z" fill="#4cb043"/><path d="M5.5 13.4 Q12.6 13.1 13.2 7.4" stroke="#4cb043" stroke-width="2.7" fill="none" stroke-linecap="round"/><path d="M9.5 7.7 L16.9 7.7 L13.2 4 Z" fill="#4cb043"/></svg>
<div class="a" style="left:1386px;top:361px;width:13px;height:13px;border:1px solid #a9a9a9;background:#fff;"></div>
<div class="t" style="left:1403.00px;top:362.00px;font-size:13px;-webkit-text-stroke:0.16px #000;color:#000;transform:scaleX(1.0670);">Chưa nhận hoặc đang nhận</div>
<div class="a" style="left:1814px;top:357px;width:91px;height:24px;border:1px solid #a9a9a9;background:repeating-linear-gradient(-45deg,#fff 0px,#fff 3.5px,#f0f0f0 3.55px,#f0f0f0 4.243px)"></div>
<svg class="a" style="left:1818px;top:362px;" width="17" height="16" viewBox="0 0 17 16"><circle cx="6" cy="6" r="4.3" fill="none" stroke="#111" stroke-width="2"/><path d="M9 9 L14 14" stroke="#111" stroke-width="2.8" stroke-linecap="round"/></svg>
<div class="t" style="left:1838.00px;top:364.00px;font-size:13px;font-weight:700;-webkit-text-stroke:0.29px #0000ff;color:#0000ff;transform:scaleX(1.0965);">Tìm kiếm</div>
<div class="a" style="left:1385px;top:385px;width:520px;height:557px;border:1px solid #a9a9a9;background:#fff;"></div>
<div class="a" style="left:1386px;top:386px;width:518px;height:22px;background:repeating-linear-gradient(-45deg,#fff 0px,#fff 3.5px,#f0f0f0 3.55px,#f0f0f0 4.243px);"></div>
<div class="a" style="left:1386px;top:408px;width:518px;height:1px;background:#a9a9a9;"></div>
<div class="a" style="left:1407px;top:386px;width:1px;height:51px;background:#a9a9a9;"></div>
<div class="a" style="left:1498px;top:386px;width:1px;height:51px;background:#a9a9a9;"></div>
<div class="a" style="left:1601px;top:386px;width:1px;height:51px;background:#a9a9a9;"></div>
<div class="a" style="left:1757px;top:386px;width:1px;height:51px;background:#a9a9a9;"></div>
<div class="a" style="left:1831px;top:386px;width:1px;height:51px;background:#a9a9a9;"></div>
<div class="t" style="left:1412.00px;top:391.34px;font-size:12px;font-weight:700;-webkit-text-stroke:0.26px #000;color:#000;transform:scaleX(1.1157);">Ngày lập</div>
<div class="t" style="left:1503.00px;top:391.34px;font-size:12px;font-weight:700;-webkit-text-stroke:0.26px #000;color:#000;transform:scaleX(1.1208);">Mã phiếu</div>
<div class="t" style="left:1606.00px;top:391.34px;font-size:12px;font-weight:700;-webkit-text-stroke:0.26px #000;color:#000;transform:scaleX(1.1031);">Nhà cung cấp</div>
<div class="t" style="left:1761.00px;top:391.34px;font-size:12px;font-weight:700;-webkit-text-stroke:0.26px #000;color:#000;transform:scaleX(1.1167);">Tổng tiền</div>
<div class="t" style="left:1836.00px;top:391.34px;font-size:12px;font-weight:700;-webkit-text-stroke:0.26px #000;color:#000;transform:scaleX(1.0476);">Ghi chú</div>
<div class="a" style="left:1386px;top:409px;width:21px;height:27px;background:repeating-linear-gradient(-45deg,#fff 0px,#fff 3.5px,#f0f0f0 3.55px,#f0f0f0 4.243px);"></div>
<div class="a" style="left:1386px;top:436px;width:518px;height:2px;background:#a0a0a0;"></div>
<svg class="a" style="left:1390px;top:418px;" width="8" height="9" viewBox="0 0 8 9"><ellipse cx="3.5" cy="2.6" rx="2.6" ry="1.9" fill="#fff" stroke="#111" stroke-width="1.2"/><rect x="2.8" y="4" width="1.4" height="4.5" fill="#111"/></svg>
<svg class="a" style="left:1416px;top:421px;" width="9" height="4" viewBox="0 0 9 4"><rect x="0" y="0" width="9" height="1" fill="#666"/><rect x="0" y="2" width="9" height="1" fill="#666"/></svg>
<svg class="a" style="left:1765px;top:421px;" width="9" height="4" viewBox="0 0 9 4"><rect x="0" y="0" width="9" height="1" fill="#666"/><rect x="0" y="2" width="9" height="1" fill="#666"/></svg>
<svg class="a" style="left:1504px;top:417px;" width="16" height="12" viewBox="0 0 16 12"><path d="M0.5 9 V4 Q0.5 3 1.5 3 H2.5 Q3.5 3 3.5 4 V9 M0.5 6.3 H3.5" fill="none" stroke="#666" stroke-width="0.9"/><rect x="4.5" y="0.5" width="6.5" height="11" rx="0.5" fill="#14a22a"/><path d="M6.5 3.5 H9 V8.5 H6.5 Z M6.5 6 H9" fill="none" stroke="#fff" stroke-width="0.9"/><path d="M14.5 3.2 H12.5 V8.8 H14.5" fill="none" stroke="#666" stroke-width="0.9"/></svg>
<svg class="a" style="left:1607px;top:417px;" width="16" height="12" viewBox="0 0 16 12"><path d="M0.5 9 V4 Q0.5 3 1.5 3 H2.5 Q3.5 3 3.5 4 V9 M0.5 6.3 H3.5" fill="none" stroke="#666" stroke-width="0.9"/><rect x="4.5" y="0.5" width="6.5" height="11" rx="0.5" fill="#14a22a"/><path d="M6.5 3.5 H9 V8.5 H6.5 Z M6.5 6 H9" fill="none" stroke="#fff" stroke-width="0.9"/><path d="M14.5 3.2 H12.5 V8.8 H14.5" fill="none" stroke="#666" stroke-width="0.9"/></svg>
<svg class="a" style="left:1836px;top:417px;" width="16" height="12" viewBox="0 0 16 12"><path d="M0.5 9 V4 Q0.5 3 1.5 3 H2.5 Q3.5 3 3.5 4 V9 M0.5 6.3 H3.5" fill="none" stroke="#666" stroke-width="0.9"/><rect x="4.5" y="0.5" width="6.5" height="11" rx="0.5" fill="#14a22a"/><path d="M6.5 3.5 H9 V8.5 H6.5 Z M6.5 6 H9" fill="none" stroke="#fff" stroke-width="0.9"/><path d="M14.5 3.2 H12.5 V8.8 H14.5" fill="none" stroke="#666" stroke-width="0.9"/></svg>
<div class="a" style="left:1408px;top:438px;width:496px;height:27px;background:#f3f3f3;"></div>
<div class="a" style="left:1408px;top:438px;width:90px;height:27px;background:linear-gradient(90deg,#ffff00,#ffffa8);"></div>
<div class="a" style="left:1386px;top:438px;width:21px;height:27px;background:repeating-linear-gradient(-45deg,#fff 0px,#fff 3.5px,#f0f0f0 3.55px,#f0f0f0 4.243px);"></div>
<svg class="a" style="left:1392px;top:447px;" width="6" height="9" viewBox="0 0 6 9"><path d="M1 0.5 L5 4.5 L1 8.5 Z" fill="#111"/></svg>
<div class="a" style="left:1407px;top:437px;width:1px;height:28px;background:#a9a9a9;"></div>
<div class="a" style="left:1498px;top:437px;width:1px;height:28px;background:#d8d8d8;"></div>
<div class="a" style="left:1601px;top:437px;width:1px;height:28px;background:#d8d8d8;"></div>
<div class="a" style="left:1757px;top:437px;width:1px;height:28px;background:#d8d8d8;"></div>
<div class="a" style="left:1831px;top:437px;width:1px;height:28px;background:#d8d8d8;"></div>
<div class="a" style="left:1386px;top:465px;width:518px;height:1px;background:#d8d8d8;"></div>
<div class="a" style="left:1386px;top:465px;width:21px;height:1px;background:#a9a9a9;"></div>
<div class="t" style="left:1412.50px;top:444.57px;font-size:13.5px;font-weight:700;-webkit-text-stroke:0.30px #ff0000;color:#ff0000;transform:scaleX(1.2819);">25/10/20...</div>
<div class="t" style="left:1503.00px;top:444.57px;font-size:13.5px;-webkit-text-stroke:0.16px #000;color:#000;transform:scaleX(1.0372);">DHN00005-2...</div>
<div class="t" style="left:1606.00px;top:444.57px;font-size:13.5px;-webkit-text-stroke:0.16px #000;color:#000;transform:scaleX(1.0287);">Công Ty Lúa Vàng</div>
<div class="t" style="left:1769.50px;top:444.57px;font-size:13.5px;-webkit-text-stroke:0.16px #000;color:#000;transform:scaleX(1.0569);">17,863,...</div>
<div class="a" style="left:1386px;top:466px;width:21px;height:27px;background:repeating-linear-gradient(-45deg,#fff 0px,#fff 3.5px,#f0f0f0 3.55px,#f0f0f0 4.243px);"></div>
<div class="a" style="left:1407px;top:465px;width:1px;height:28px;background:#a9a9a9;"></div>
<div class="a" style="left:1498px;top:465px;width:1px;height:28px;background:#d8d8d8;"></div>
<div class="a" style="left:1601px;top:465px;width:1px;height:28px;background:#d8d8d8;"></div>
<div class="a" style="left:1757px;top:465px;width:1px;height:28px;background:#d8d8d8;"></div>
<div class="a" style="left:1831px;top:465px;width:1px;height:28px;background:#d8d8d8;"></div>
<div class="a" style="left:1386px;top:493px;width:518px;height:1px;background:#d8d8d8;"></div>
<div class="a" style="left:1386px;top:493px;width:21px;height:1px;background:#a9a9a9;"></div>
<div class="t" style="left:1412.00px;top:472.57px;font-size:13.5px;-webkit-text-stroke:0.16px #000;color:#000;transform:scaleX(1.0995);">25/10/2023</div>
<div class="t" style="left:1503.00px;top:472.57px;font-size:13.5px;-webkit-text-stroke:0.16px #000;color:#000;transform:scaleX(1.0372);">DHN00004-2...</div>
<div class="t" style="left:1606.00px;top:472.57px;font-size:13.5px;-webkit-text-stroke:0.16px #000;color:#000;transform:scaleX(0.9874);">CTY Phân Quế Lâm</div>
<div class="t" style="left:1776.90px;top:472.57px;font-size:13.5px;-webkit-text-stroke:0.16px #000;color:#000;transform:scaleX(1.0673);">525,000</div>
<div class="a" style="left:1386px;top:494px;width:21px;height:27px;background:repeating-linear-gradient(-45deg,#fff 0px,#fff 3.5px,#f0f0f0 3.55px,#f0f0f0 4.243px);"></div>
<div class="a" style="left:1407px;top:493px;width:1px;height:28px;background:#a9a9a9;"></div>
<div class="a" style="left:1498px;top:493px;width:1px;height:28px;background:#d8d8d8;"></div>
<div class="a" style="left:1601px;top:493px;width:1px;height:28px;background:#d8d8d8;"></div>
<div class="a" style="left:1757px;top:493px;width:1px;height:28px;background:#d8d8d8;"></div>
<div class="a" style="left:1831px;top:493px;width:1px;height:28px;background:#d8d8d8;"></div>
<div class="a" style="left:1386px;top:521px;width:518px;height:1px;background:#d8d8d8;"></div>
<div class="a" style="left:1386px;top:521px;width:21px;height:1px;background:#a9a9a9;"></div>
<div class="t" style="left:1412.00px;top:500.57px;font-size:13.5px;-webkit-text-stroke:0.16px #000;color:#000;transform:scaleX(1.0995);">25/10/2023</div>
<div class="t" style="left:1503.00px;top:500.57px;font-size:13.5px;-webkit-text-stroke:0.16px #000;color:#000;transform:scaleX(1.0372);">DHN00003-2...</div>
<div class="t" style="left:1606.00px;top:500.57px;font-size:13.5px;-webkit-text-stroke:0.16px #000;color:#000;transform:scaleX(1.0586);">Cty cổ phần phân bó...</div>
<div class="t" style="left:1784.60px;top:500.57px;font-size:13.5px;-webkit-text-stroke:0.16px #000;color:#000;transform:scaleX(1.0751);">92,500</div>
<div class="a" style="left:1386px;top:522px;width:21px;height:27px;background:repeating-linear-gradient(-45deg,#fff 0px,#fff 3.5px,#f0f0f0 3.55px,#f0f0f0 4.243px);"></div>
<div class="a" style="left:1407px;top:521px;width:1px;height:28px;background:#a9a9a9;"></div>
<div class="a" style="left:1498px;top:521px;width:1px;height:28px;background:#d8d8d8;"></div>
<div class="a" style="left:1601px;top:521px;width:1px;height:28px;background:#d8d8d8;"></div>
<div class="a" style="left:1757px;top:521px;width:1px;height:28px;background:#d8d8d8;"></div>
<div class="a" style="left:1831px;top:521px;width:1px;height:28px;background:#d8d8d8;"></div>
<div class="a" style="left:1386px;top:549px;width:518px;height:1px;background:#d8d8d8;"></div>
<div class="a" style="left:1386px;top:549px;width:21px;height:1px;background:#a9a9a9;"></div>
<div class="t" style="left:1412.00px;top:528.57px;font-size:13.5px;-webkit-text-stroke:0.16px #000;color:#000;transform:scaleX(1.0995);">15/07/2023</div>
<div class="t" style="left:1503.00px;top:528.57px;font-size:13.5px;-webkit-text-stroke:0.16px #000;color:#000;transform:scaleX(1.0372);">DHN00002-1...</div>
<div class="t" style="left:1606.00px;top:528.57px;font-size:13.5px;-webkit-text-stroke:0.16px #000;color:#000;transform:scaleX(1.0154);">Cty ABC</div>
<div class="t" style="left:1768.90px;top:528.57px;font-size:13.5px;-webkit-text-stroke:0.16px #000;color:#000;transform:scaleX(1.0676);">24,500,...</div>
<div class="a" style="left:1386px;top:550px;width:21px;height:27px;background:repeating-linear-gradient(-45deg,#fff 0px,#fff 3.5px,#f0f0f0 3.55px,#f0f0f0 4.243px);"></div>
<div class="a" style="left:1407px;top:549px;width:1px;height:28px;background:#a9a9a9;"></div>
<div class="a" style="left:1498px;top:549px;width:1px;height:28px;background:#d8d8d8;"></div>
<div class="a" style="left:1601px;top:549px;width:1px;height:28px;background:#d8d8d8;"></div>
<div class="a" style="left:1757px;top:549px;width:1px;height:28px;background:#d8d8d8;"></div>
<div class="a" style="left:1831px;top:549px;width:1px;height:28px;background:#d8d8d8;"></div>
<div class="a" style="left:1386px;top:577px;width:518px;height:1px;background:#d8d8d8;"></div>
<div class="a" style="left:1386px;top:577px;width:21px;height:1px;background:#a9a9a9;"></div>
<div class="t" style="left:1412.00px;top:556.57px;font-size:13.5px;-webkit-text-stroke:0.16px #000;color:#000;transform:scaleX(1.0995);">10/07/2023</div>
<div class="t" style="left:1503.00px;top:556.57px;font-size:13.5px;-webkit-text-stroke:0.16px #000;color:#000;transform:scaleX(1.0372);">DHN00001-1...</div>
<div class="t" style="left:1606.00px;top:556.57px;font-size:13.5px;-webkit-text-stroke:0.16px #000;color:#000;transform:scaleX(0.9364);">NCCTHUA</div>
<div class="t" style="left:1784.60px;top:556.57px;font-size:13.5px;-webkit-text-stroke:0.16px #000;color:#000;transform:scaleX(1.0751);">40,000</div>
<div class="a" style="left:1407px;top:577px;width:1px;height:1px;background:#a9a9a9;"></div>
<div class="a" style="left:1386px;top:891px;width:518px;height:33px;background:repeating-linear-gradient(-45deg,#fff 0px,#fff 3.5px,#f0f0f0 3.55px,#f0f0f0 4.243px);"></div>
<div class="a" style="left:1386px;top:890px;width:518px;height:1px;background:#a9a9a9;"></div>
<div class="a" style="left:1500px;top:893px;width:101px;height:29px;border:1px dashed #c8c8c8;background:#fff"></div>
<div class="a" style="left:1757px;top:893px;width:74px;height:29px;border:1px dashed #c8c8c8;background:#fff"></div>
<div class="t" style="left:1521.20px;top:902.15px;font-size:14px;font-weight:700;-webkit-text-stroke:0.31px #ff0000;color:#ff0000;transform:scaleX(1.0383);">Có 5 phiếu</div>
<div class="t" style="left:1764.80px;top:902.15px;font-size:14px;font-weight:700;-webkit-text-stroke:0.31px #ff0000;color:#ff0000;transform:scaleX(1.1156);">43,021...</div>
<div class="a" style="left:1386px;top:924px;width:518px;height:0;border-top:1px dashed #c8c8c8"></div>
<svg class="a" style="left:1390px;top:927px;" width="7" height="10" viewBox="0 0 7 10"><path d="M5.5 0.5 L1 5 L5.5 9.5 Z" fill="#111"/></svg>
<div class="a" style="left:1403px;top:924px;width:369px;height:16px;border:1px solid #a9a9a9;background:repeating-linear-gradient(-45deg,#fff 0px,#fff 3.5px,#f0f0f0 3.55px,#f0f0f0 4.243px)"></div>
<svg class="a" style="left:1891px;top:927px;" width="7" height="10" viewBox="0 0 7 10"><path d="M1.5 0.5 L6 5 L1.5 9.5 Z" fill="#111"/></svg>
<svg class="a" style="left:1480px;top:570px;" width="260" height="135" viewBox="0 0 260 135"><defs><filter id="sh" x="-20%" y="-20%" width="140%" height="140%"><feGaussianBlur in="SourceAlpha" stdDeviation="1.5"/><feOffset dx="1" dy="2"/><feComponentTransfer><feFuncA type="linear" slope="0.45"/></feComponentTransfer><feMerge><feMergeNode/><feMergeNode in="SourceGraphic"/></feMerge></filter></defs><g filter="url(#sh)"><path d="M83 42 L17 9" stroke="#111" stroke-width="2"/><path d="M13.5 7.5 L23 9 L19.5 14 Z" fill="#111"/><rect x="82.5" y="42.5" width="159" height="80" rx="5" fill="#fff" stroke="#111" stroke-width="2"/></g></svg>
<div class="t" style="left:1568.60px;top:637.15px;font-size:14px;-webkit-text-stroke:0.17px #111;color:#111;transform:scaleX(1.1086);">1.Danh sách đơn đặt</div>
<div class="t" style="left:1575.60px;top:655.15px;font-size:14px;-webkit-text-stroke:0.17px #111;color:#111;transform:scaleX(1.0898);">hàng nhà cung cấp</div>
<svg class="a" style="left:1191px;top:617px;" width="16" height="22" viewBox="0 0 16 22"><path d="M1.5 1.5 L1.5 17 L5.3 13.5 L8 19.5 L10.5 18.5 L7.8 12.8 L12.8 12.8 Z" fill="#fff" stroke="#111" stroke-width="1"/></svg>
</body></html>
